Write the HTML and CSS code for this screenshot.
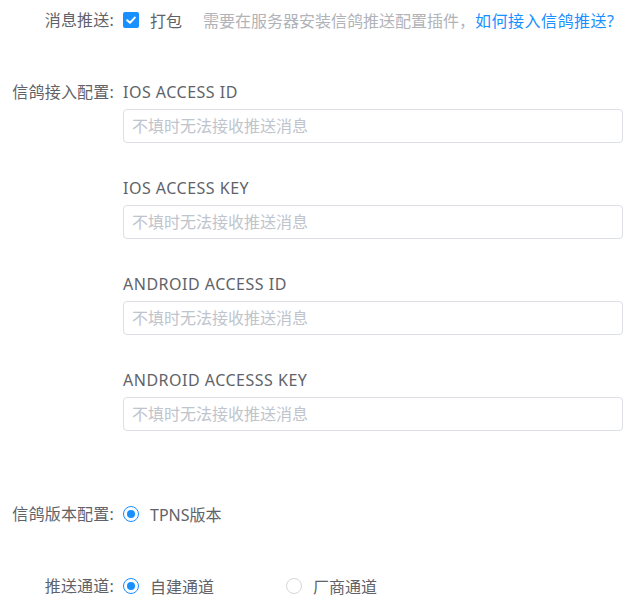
FILE: index.html
```html
<!DOCTYPE html>
<html lang="zh-CN">
<head>
<meta charset="utf-8">
<title>信鸽推送配置</title>
<link rel="stylesheet" href="styles.css">
</head>
<body>
<form class="form">
  <div class="form-item row-push">
    <label class="item-label">消息推送:</label>
    <div class="item-content inline">
      <span class="checkbox checked">
        <svg viewBox="0 0 16 16" width="16" height="16"><path d="M4.2 8.2 L7 10.8 L11.8 5.6" fill="none" stroke="#fff" stroke-width="2" stroke-linecap="round" stroke-linejoin="round"/></svg>
      </span>
      <span class="check-text">打包</span>
      <span class="hint">需要在服务器安装信鸽推送配置插件，<a class="link" href="#">如何接入信鸽推送?</a></span>
    </div>
  </div>

  <div class="form-item row-access">
    <label class="item-label">信鸽接入配置:</label>
    <div class="item-content fields">
      <div class="field">
        <div class="field-label">IOS ACCESS ID</div>
        <input class="input" type="text" placeholder="不填时无法接收推送消息">
      </div>
      <div class="field">
        <div class="field-label">IOS ACCESS KEY</div>
        <input class="input" type="text" placeholder="不填时无法接收推送消息">
      </div>
      <div class="field">
        <div class="field-label">ANDROID ACCESS ID</div>
        <input class="input" type="text" placeholder="不填时无法接收推送消息">
      </div>
      <div class="field">
        <div class="field-label">ANDROID ACCESSS KEY</div>
        <input class="input" type="text" placeholder="不填时无法接收推送消息">
      </div>
    </div>
  </div>

  <div class="form-item row-version">
    <label class="item-label">信鸽版本配置:</label>
    <div class="item-content inline">
      <span class="radio-option">
        <span class="radio checked"></span>
        <span class="radio-text">TPNS版本</span>
      </span>
    </div>
  </div>

  <div class="form-item row-channel">
    <label class="item-label">推送通道:</label>
    <div class="item-content inline">
      <span class="radio-option">
        <span class="radio checked"></span>
        <span class="radio-text">自建通道</span>
      </span>
      <span class="radio-option">
        <span class="radio"></span>
        <span class="radio-text">厂商通道</span>
      </span>
    </div>
  </div>
</form>
</body>
</html>
```

FILE: styles.css
```css
* { box-sizing: border-box; }

body {
  margin: 0;
  background: #fff;
  font-family: "Noto Sans", "Noto Sans CJK SC", sans-serif;
  font-size: 16px;
  color: #5f6369;
}

.form {
  display: flex;
  flex-direction: column;
}

.form-item {
  display: grid;
  grid-template-columns: 114px 1fr;
  column-gap: 9px;
  align-items: start;
}

.row-push { margin-top: 8px; }
.row-access { margin-top: 48px; }
.row-version { margin-top: 71px; }
.row-channel { margin-top: 48px; }

.item-label {
  text-align: right;
  line-height: 24px;
  white-space: nowrap;
  letter-spacing: 0.2px;
}

.inline {
  display: flex;
  align-items: center;
  height: 24px;
  white-space: nowrap;
}

.checkbox {
  width: 16px;
  height: 16px;
  border-radius: 2px;
  background: #1890ff;
  display: inline-flex;
  flex: none;
}

.check-text {
  margin-left: 11px;
}

.hint {
  margin-left: 21px;
  color: #b1b3b8;
}

.link {
  color: #1890ff;
  text-decoration: none;
  letter-spacing: 0.5px;
}

.fields {
  display: flex;
  flex-direction: column;
  gap: 33px;
}

.field {
  display: flex;
  flex-direction: column;
  gap: 5px;
}

.field-label {
  line-height: 24px;
  letter-spacing: 0.5px;
}

.input {
  width: 500px;
  height: 34px;
  border: 1px solid #dcdfe6;
  border-radius: 4px;
  padding: 0 8px;
  font-family: inherit;
  font-size: 16px;
  color: #606266;
  background: #fff;
  outline: none;
}

.input::placeholder {
  color: #c0c4cc;
}

.radio-option {
  display: inline-flex;
  align-items: center;
  margin-right: 72px;
}

.radio {
  width: 16px;
  height: 16px;
  border-radius: 50%;
  border: 1px solid #d4d6da;
  background: #fff;
  flex: none;
  display: inline-flex;
  align-items: center;
  justify-content: center;
}

.radio.checked {
  border: 1.5px solid #1890ff;
}

.radio.checked::after {
  content: "";
  width: 8px;
  height: 8px;
  border-radius: 50%;
  background: #1890ff;
}

.radio-text {
  margin-left: 11px;
}
```
